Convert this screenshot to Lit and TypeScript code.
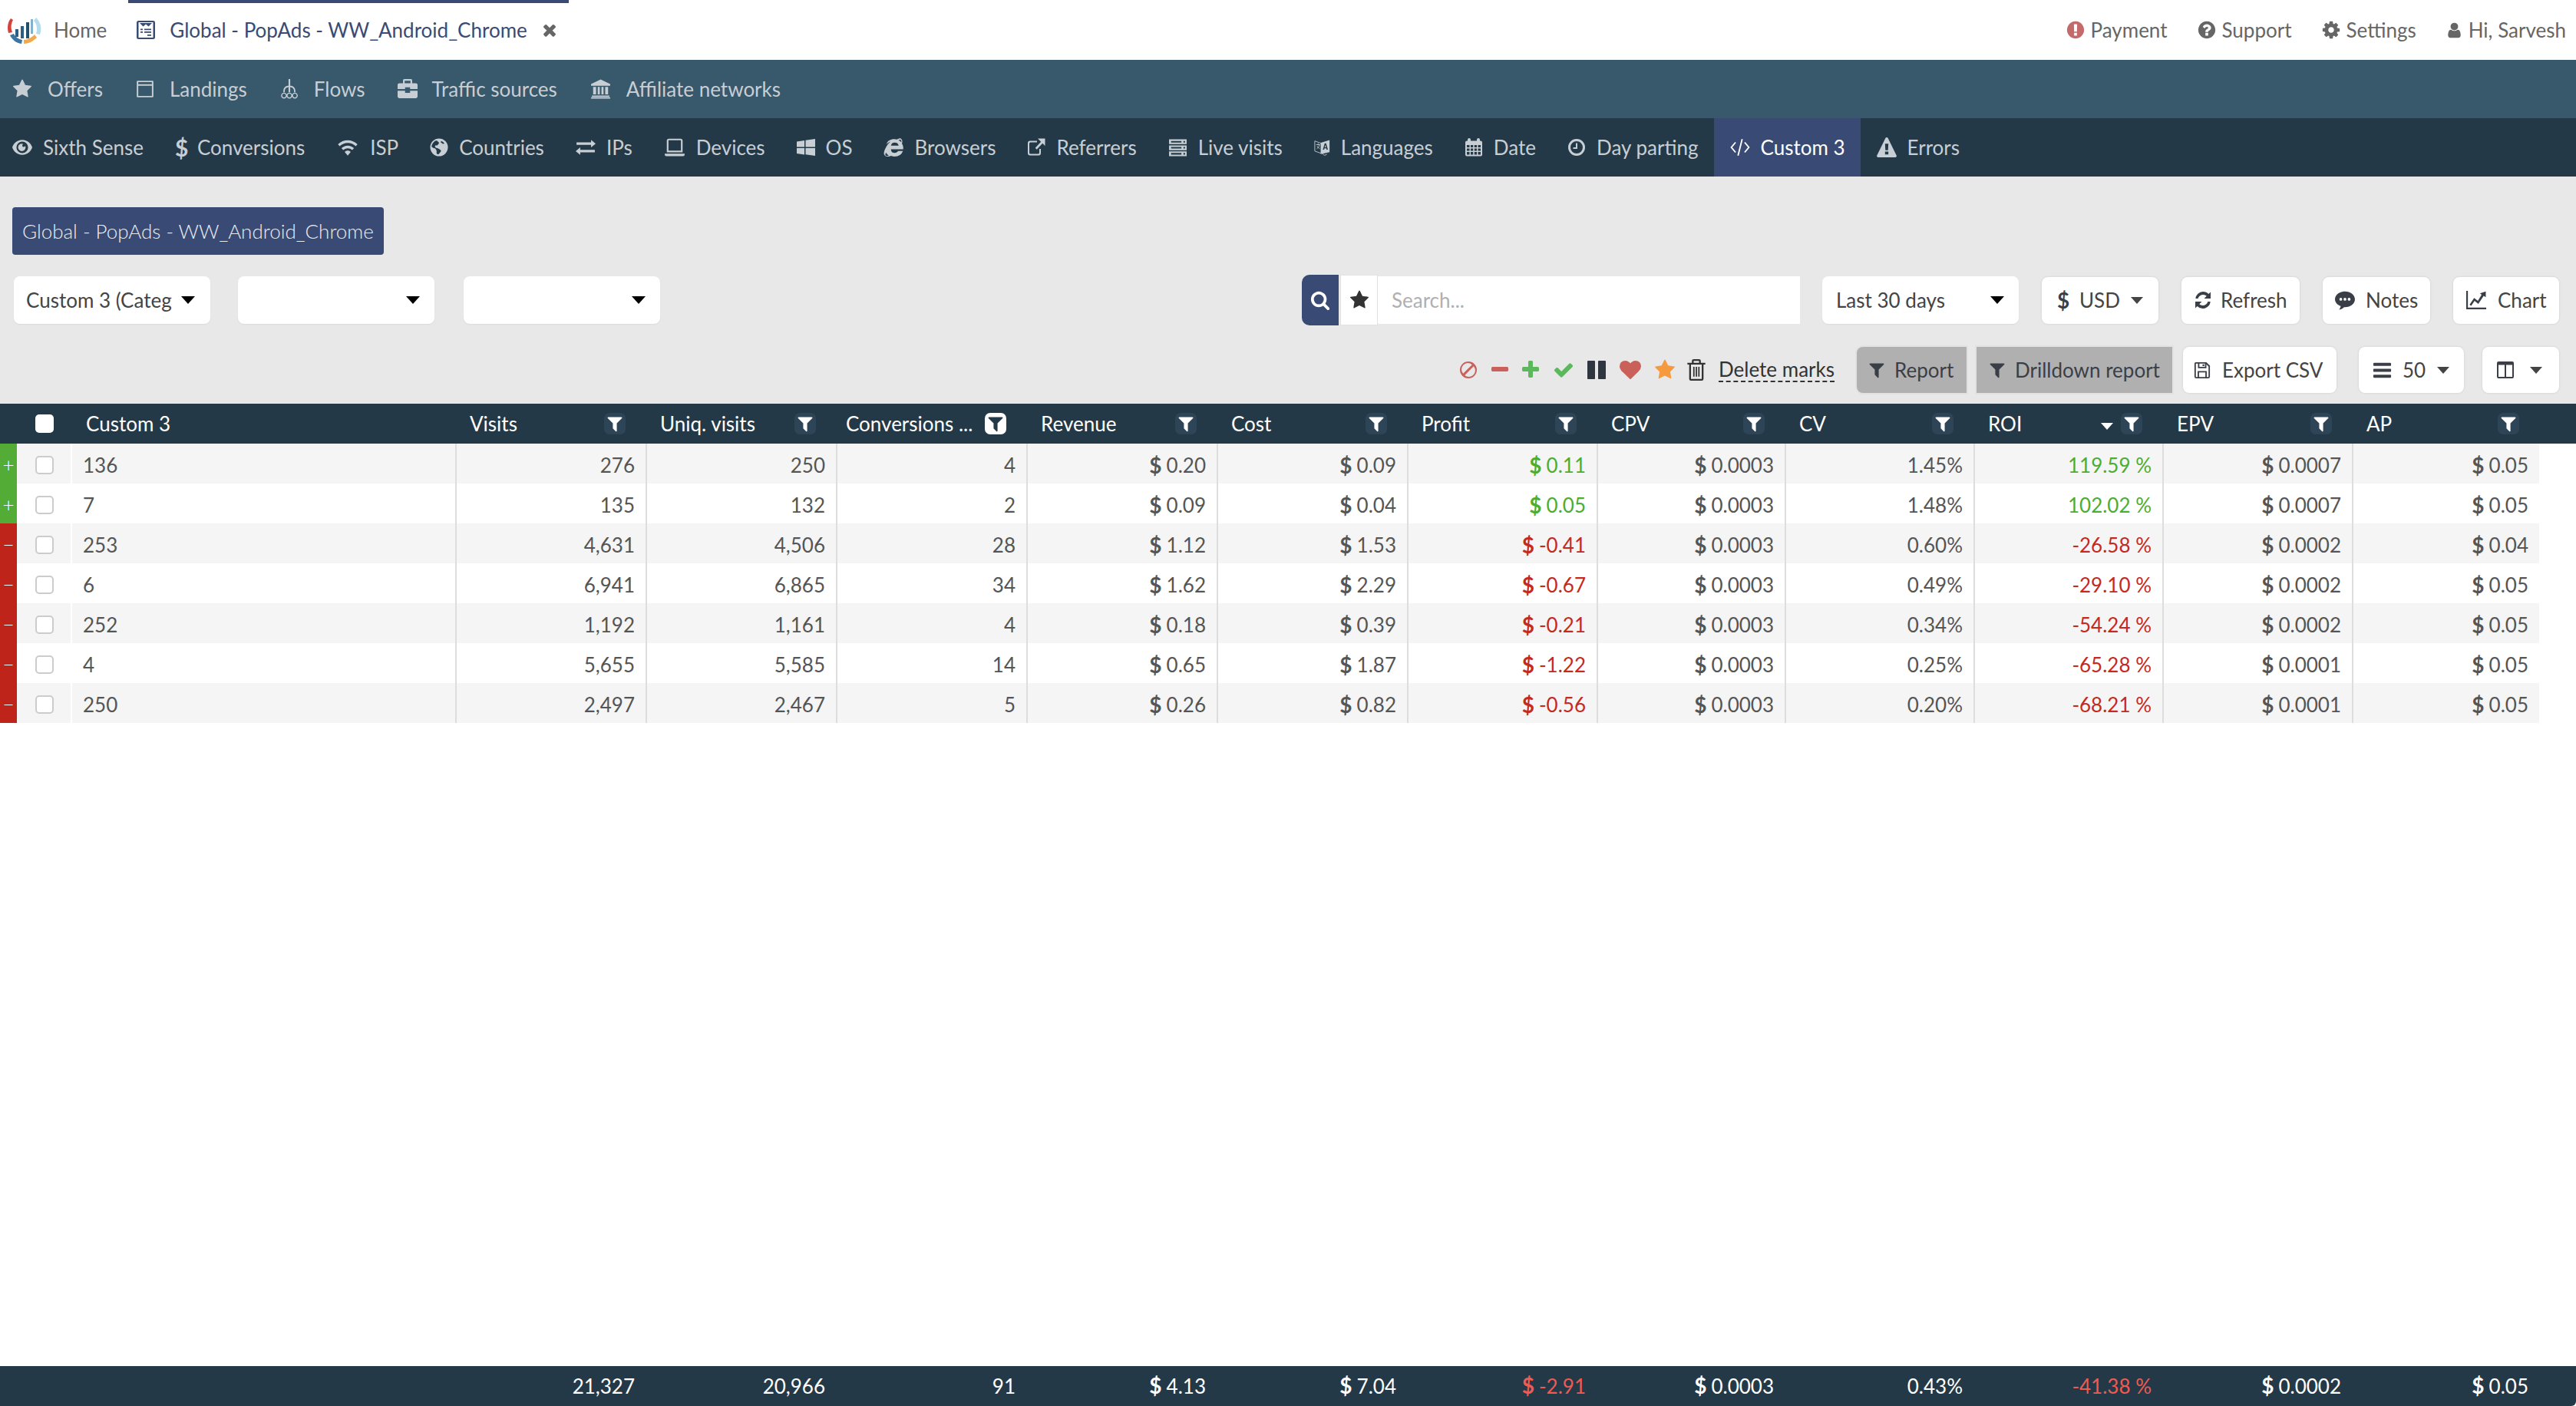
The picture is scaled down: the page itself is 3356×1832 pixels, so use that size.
import { LitElement, html, css, svg } from "lit";
import { customElement } from "lit/decorators.js";

const FA: Record<string, string> = {
  star: "M1728 647q0 22-26 48l-363 354 86 500q1 7 1 20 0 21-10.500 35.500t-30.500 14.500q-19 0-40-12l-449-236-449 236q-22 12-40 12-21 0-31.500-14.500t-10.500-35.500q0-6 2-20l86-500-364-354q-25-27-25-48 0-37 56-46l502-73 225-455q19-41 49-41t49 41l225 455 502 73q56 9 56 46z",
  filter: "M1595 295q17 41-14 70l-493 493v742q0 42-39 59-13 5-25 5-27 0-45-19l-256-256q-19-19-19-45v-486l-493-493q-31-29-14-70 17-39 59-39h1280q42 0 59 39z",
  heart: "M896 1664q-26 0-44-18l-624-602q-10-8-27.500-26t-55.500-65.500-68-97.500-53.500-121-23.500-138q0-220 127-344t351-124q62 0 126.500 21.500t120 58 95.500 68.500 76 68q36-36 76-68t95.500-68.500 120-58 126.500-21.500q224 0 351 124t127 344q0 221-229 450l-623 600q-18 18-44 18z",
  user: "M1536 1399q0 109-62.500 187t-150.500 78h-854q-88 0-150.500-78t-62.500-187q0-85 8.500-160.500t31.500-152 58.500-131 94-89 134.500-34.500q131 128 313 128t313-128q76 0 134.500 34.500t94 89 58.500 131 31.500 152 8.500 160.500zm-256-887q0 159-112.500 271.500t-271.500 112.500-271.500-112.500-112.500-271.500 112.500-271.500 271.500-112.500 271.500 112.500 112.500 271.500z",
  search: "M1216 832q0-185-131.500-316.500t-316.500-131.500-316.500 131.500-131.500 316.500 131.500 316.500 316.500 131.500 316.500-131.500 131.500-316.500zm512 832q0 52-38 90t-90 38q-54 0-90-38l-343-342q-179 124-399 124-143 0-273.500-55.500t-225-150-150-225-55.500-273.500 55.500-273.500 150-225 225-150 273.500-55.500 273.500 55.500 225 150 150 225 55.500 273.500q0 220-124 399l343 343q37 37 37 90z",
  check: "M1671 566q0 40-28 68l-724 724-136 136q-28 28-68 28t-68-28l-136-136-362-362q-28-28-28-68t28-68l136-136q28-28 68-28t68 28l294 295 656-657q28-28 68-28t68 28l136 136q28 28 28 68z",
  times: "M1490 1322q0 40-28 68l-136 136q-28 28-68 28t-68-28l-294-294-294 294q-28 28-68 28t-68-28l-136-136q-28-28-28-68t28-68l294-294-294-294q-28-28-28-68t28-68l136-136q28-28 68-28t68 28l294 294 294-294q28-28 68-28t68 28l136 136q28 28 28 68t-28 68l-294 294 294 294q28 28 28 68z",
  bars: "M1664 1344v128q0 26-19 45t-45 19h-1408q-26 0-45-19t-19-45v-128q0-26 19-45t45-19h1408q26 0 45 19t19 45zm0-512v128q0 26-19 45t-45 19h-1408q-26 0-45-19t-19-45v-128q0-26 19-45t45-19h1408q26 0 45 19t19 45zm0-512v128q0 26-19 45t-45 19h-1408q-26 0-45-19t-19-45v-128q0-26 19-45t45-19h1408q26 0 45 19t19 45z",
  plus: "M1600 736v192q0 40-28 68t-68 28h-416v416q0 40-28 68t-68 28h-192q-40 0-68-28t-28-68v-416h-416q-40 0-68-28t-28-68v-192q0-40 28-68t68-28h416v-416q0-40 28-68t68-28h192q40 0 68 28t28 68v416h416q40 0 68 28t28 68z",
  minus: "M1600 736v192q0 40-28 68t-68 28h-1216q-40 0-68-28t-28-68v-192q0-40 28-68t68-28h1216q40 0 68 28t28 68z",
  pause: "M1664 192v1408q0 26-19 45t-45 19h-512q-26 0-45-19t-19-45v-1408q0-26 19-45t45-19h512q26 0 45 19t19 45zm-896 0v1408q0 26-19 45t-45 19h-512q-26 0-45-19t-19-45v-1408q0-26 19-45t45-19h512q26 0 45 19t19 45z",
  excl: "M896 128q209 0 385.500 103t279.500 279.500 103 385.500-103 385.500-279.500 279.500-385.500 103-385.500-103-279.500-279.500-103-385.500 103-385.500 279.500-279.500 385.500-103zm128 1247v-190q0-14-9-23.500t-22-9.500h-192q-13 0-23 10t-10 23v190q0 13 10 23t23 10h192q13 0 22-9.500t9-23.500zm-2-344l18-621q0-12-10-18-10-8-24-8h-220q-14 0-24 8-10 6-10 18l17 621q0 10 10 17.500t24 7.500h185q14 0 23.500-7.500t10.500-17.500z",
  question: "M1024 1376v-192q0-14-9-23t-23-9h-192q-14 0-23 9t-9 23v192q0 14 9 23t23 9h192q14 0 23-9t9-23zm256-672q0-88-55.500-163t-138.500-116-170-41q-243 0-371 213-15 24 8 42l132 100q7 6 19 6 16 0 25-12 53-68 86-92 34-24 86-24 48 0 85.500 26t37.500 59q0 38-20 61t-68 45q-63 28-115.500 86.500t-52.500 125.500v36q0 14 9 23t23 9h192q14 0 23-9t9-23q0-19 21.500-49.500t54.500-49.500q32-18 49-28.500t46-35 44.500-48 28-60.500 12.500-81zm384 192q0 209-103 385.500t-279.500 279.500-385.500 103-385.500-103-279.500-279.500-103-385.500 103-385.500 279.500-279.500 385.500-103 385.500 103 279.500 279.500 103 385.500z",
  cog: "M1152 896q0-106-75-181t-181-75-181 75-75 181 75 181 181 75 181-75 75-181zm512-109v222q0 12-8 23t-20 13l-185 28q-19 54-39 91 35 50 107 138 10 12 10 25t-9 23q-27 37-99 108t-94 71q-12 0-26-9l-138-108q-44 23-91 38-16 136-29 186-7 28-36 28h-222q-14 0-24.500-8.500t-11.500-21.500l-28-184q-49-16-90-37l-141 107q-10 9-25 9-14 0-25-11-126-114-165-168-7-10-7-23 0-12 8-23 15-21 51-66.500t54-70.500q-27-50-41-99l-183-27q-13-2-21-12.500t-8-23.500v-222q0-12 8-23t19-13l186-28q14-46 39-92-40-57-107-138-10-12-10-24 0-10 9-23 26-36 98.500-107.500t94.500-71.500q13 0 26 10l138 107q44-23 91-38 16-136 29-186 7-28 36-28h222q14 0 24.500 8.500t11.500 21.500l28 184q49 16 90 37l142-107q9-9 24-9 13 0 25 10 129 119 165 170 7 8 7 22 0 12-8 23-15 21-51 66.500t-54 70.500q26 50 41 98l183 28q13 2 21 12.500t8 23.500z",
};

const fa = (n: string, c = "") =>
  html`<svg class="ic ${c}" viewBox="0 0 1792 1792"><path d=${FA[n]}></path></svg>`;

const D: Record<string, any> = {
  window: svg`<path fill-rule="evenodd" d="M3 2h18a1 1 0 0 1 1 1v18a1 1 0 0 1-1 1H3a1 1 0 0 1-1-1V3a1 1 0 0 1 1-1zm.8 6v12.200h16.400V8zm0-4.200v2.400h16.400V3.800z"/>`,
  flows: svg`<path d="M11 0h2v8c2.700 0 5.800 1.500 6.200 5.500l.1 2.500h-1.700l-.1-2.500c-.3-2.300-2-3.500-4.500-3.800V16h-2v-6.300C8.500 10 6.800 11.200 6.500 13.500L6.400 16H4.700l.1-2.500C5.200 9.500 8.300 8 11 8z"/><path fill="none" stroke="currentColor" stroke-width="1.300" d="M5.500 17a2.900 2.900 0 1 0 .1 0zM12 17a2.900 2.900 0 1 0 .1 0zM18.500 17a2.900 2.900 0 1 0 .1 0z"/>`,
  brief: svg`<path fill-rule="evenodd" d="M8 0h8a1.500 1.500 0 0 1 1.500 1.500V5H22a2 2 0 0 1 2 2v5h-9v-2H9v2H0V7a2 2 0 0 1 2-2h4.500V1.500A1.500 1.500 0 0 1 8 0zM8.500 2v3h7V2zM0 14h9v2.500h6V14h9v7a2 2 0 0 1-2 2H2a2 2 0 0 1-2-2z"/>`,
  bank: svg`<path d="M12 .5 23.500 6v2H.5V6zM3 9.500h3.500v9H3zM8.500 9.500H11v9H8.500zM13 9.500h2.500v9H13zM17.500 9.500H21v9h-3.500zM1.500 19.800h21v1.700h-21zM.5 22h23v1.500H.5z"/>`,
  eye: svg`<path fill-rule="evenodd" d="M12 3c6.600 0 11 5.200 12 9-1 3.800-5.400 9-12 9S1 15.800 0 12c1-3.800 5.400-9 12-9zm0 2a7 7 0 1 0 0 14 7 7 0 0 0 0-14zm-.5 2.500c.6 0 1.300.2 1.800.5-.8.200-1.300.9-1.300 1.700 0 1 .8 1.800 1.800 1.800.8 0 1.500-.5 1.700-1.300.3.500.5 1.200.5 1.800a4.500 4.500 0 1 1-4.500-4.500z"/>`,
  wifi: svg`<path d="M12 3.500c4.500 0 8.600 1.800 11.700 4.800l-2 2.400A14 14 0 0 0 12 6.800c-3.800 0-7.200 1.500-9.700 3.900l-2-2.400A16.600 16.600 0 0 1 12 3.500zM12 10c2.900 0 5.500 1.200 7.500 3l-2 2.300A8 8 0 0 0 12 13.100c-2.100 0-4 .9-5.500 2.200l-2-2.300c2-1.800 4.600-3 7.500-3zM12 16c1.400 0 2.700.6 3.600 1.500L12 22l-3.600-4.500c.9-.9 2.200-1.500 3.600-1.500z"/>`,
  globe: svg`<path fill-rule="evenodd" d="M12 .5a11.500 11.500 0 1 1 0 23 11.500 11.500 0 0 1 0-23zM7 3.500c-2.500 1.500-4.500 4.500-4.800 7.500.8.700 1.500 1.400 2.300 1.700 1.200.4 2.500.2 3 1.300.4 1 1.200 1.500 1.300 2.700.1 1.300-.3 2.700.5 4 .7.300 1.500.4 2.200.4.700-1.300 2.500-2.500 3-4 .3-1-.5-1.800-1.500-2.300-1-.7-2-1.800-3.400-1.800-1 0-1.800-.7-2.500-1.300-.5-.7-.4-1.700.3-2.300.8-.2 1.500.3 2.300.2.300-.8.900-1.300 1.500-1.800.8-.8.800-2 .2-2.800-.9-.3-1.700-1.100-2-1.800-.9-.1-1.500-.1-2 .2zm8 .3c-.5.5-.8 1.200-.7 1.800.5.700 1.500.7 2 1.500.4.700 1.700.5 2.700 0a9.500 9.500 0 0 0-4-3.300z"/>`,
  exch: svg`<path d="M24 7.500 18.500 3v3H1v3h17.500v3zM0 16.500 5.500 12v3H23v3H5.500v3z"/>`,
  laptop: svg`<path fill-rule="evenodd" d="M5 1.500h14A2.500 2.500 0 0 1 21.500 4v14h-19V4A2.500 2.500 0 0 1 5 1.500zm-.5 2V16h15V3.500zM0 19.500h24v1A2 2 0 0 1 22 22.500H2a2 2 0 0 1-2-2z"/>`,
  win: svg`<path d="M0 4.500 10 3v8.500H0zM11.500 2.800 24 1v10.500H11.500zM0 13h10v8.500L0 20zM11.500 13H24v10l-12.500-1.800z"/>`,
  ie: svg`<path fill-rule="evenodd" d="M21 1.500c1.800 1.200 2 3.500 1.200 6 1 1.500 1.600 3.200 1.600 5.200 0 .6 0 1-.1 1.500H9c0 3 2 4.500 4.500 4.500 1.800 0 3.300-.8 4-2.300h5.800c-1.300 4-5 6.700-9.800 6.700-1.500 0-3-.3-4.300-.9-2.500 1.200-5.800 1.500-7.500-.2-2-2-1-5.700.8-9C4 9.500 6 7 8.500 5c-1.500.2-3.500 1.700-5 3.300C4.700 4 8.500 2 13 2c1.200 0 2.300.2 3.300.5 1.800-1 3.700-1.700 4.700-1zM9 10h9.200C18 7.800 16 6.300 13.500 6.300 11 6.300 9.200 7.800 9 10zM20 2.800c-.6-.1-1.300.1-2 .5 1.300.6 2.500 1.500 3.400 2.500.3-1.300 0-2.700-1.400-3zM2.800 22c1 .5 2.300.3 3.600-.2-1.400-.9-2.600-2.100-3.400-3.600-.8 1.700-1.200 3-.2 3.800z"/>`,
  ext: svg`<path d="M4 3.500h9v2H4.500A1.500 1.500 0 0 0 3 7v12a1.500 1.500 0 0 0 1.500 1.500h10A1.500 1.500 0 0 0 16 19v-5h2v5.500a3 3 0 0 1-3 3H4a3 3 0 0 1-3-3V6.500a3 3 0 0 1 3-3z"/><path d="M14 .5h9.500V10l-3.300-3.300-7.500 8-2-2 7.500-8z"/>`,
  server: svg`<path fill-rule="evenodd" d="M1 2h22v6H1zm2.500 2v2h13V4zm15.500 0v2h2V4zM1 9.500h22v6H1zm2.500 2v2h13v-2zm15.500 0v2h2v-2zM1 17h22v6H1zm2.500 2v2h13v-2zm15.500 0v2h2v-2z"/>`,
  lang: svg`<path d="M1 2.500 10.500 6v15L1 17.500z" fill="none" stroke="currentColor" stroke-width="1"/><path d="M10 5 23 1v18l-13 3z"/><path fill="#243947" d="M13 15.500 15.800 6h2l2.800 9.500h-2l-.5-2h-2.700l-.5 2zM15.800 12h2l-1-3.800z"/><path fill="none" stroke="currentColor" stroke-width="1" d="M3 8h6M6 6v2M8 8c-.5 3-2 5-4 6M4.500 10c.5 1.500 2 3 4 4M13 21c0 2 2 3 4 2.500l2-1.500"/>`,
  cal: svg`<path fill-rule="evenodd" d="M6 0a2 2 0 0 1 2 2v1.500h8V2a2 2 0 0 1 4 0v1.500h1A2 2 0 0 1 23 5.500v16a2 2 0 0 1-2 2H3a2 2 0 0 1-2-2v-16a2 2 0 0 1 2-2h1V2a2 2 0 0 1 2-2zM3 9v3h3.500V9zm5 0v3h3.200V9zm4.800 0v3H16V9zm4.700 0v3H21V9zM3 13.500v3h3.500v-3zm5 0v3h3.200v-3zm4.800 0v3H16v-3zm4.700 0v3H21v-3zM3 18v3.500h3.500V18zm5 0v3.500h3.200V18zm4.800 0v3.500H16V18zm4.700 0v3.500H21V18z"/>`,
  clock: svg`<path fill-rule="evenodd" d="M12 1a11 11 0 1 1 0 22 11 11 0 0 1 0-22zm0 3a8 8 0 1 0 0 16 8 8 0 0 0 0-16zm1 2.500V14H7.500v-2H11V6.500z"/>`,
  code: svg`<path fill="none" stroke="currentColor" stroke-width="1.700" d="M6.500 6 1.500 12l5 6M17.500 6l5 6-5 6M14.500 2l-5 20"/>`,
  warn: svg`<path fill-rule="evenodd" d="M12 0c.6 0 1.100.3 1.400.8L23.600 21.500a1.600 1.600 0 0 1-1.400 2.500H1.800a1.600 1.600 0 0 1-1.400-2.500L10.600.8C10.900.3 11.400 0 12 0zm-2 7.500.4 8h3.200l.4-8zm0 9.500v3.500h4V17z"/>`,
  refresh: svg`<path d="M12 1c2.900 0 5.500 1.100 7.400 3L22 1.500V10h-8.500l3.200-3.200A6.800 6.800 0 0 0 5.600 10H2.300A10 10 0 0 1 12 1zM2 14h8.500l-3.200 3.200A6.800 6.800 0 0 0 18.400 14h3.300A10 10 0 0 1 4.600 20L2 22.500z"/>`,
  comment: svg`<path fill-rule="evenodd" d="M12 1.500c6.600 0 12 4.200 12 9.500s-5.400 9.500-12 9.500h-1c-1.500 1.500-3.500 2.600-6 3 1-1.300 1.700-2.700 1.900-4.300C2.800 17.700 0 14.600 0 11c0-5.300 5.400-9.500 12-9.500zM7 9.300a1.700 1.700 0 1 0 0 3.400 1.700 1.700 0 0 0 0-3.400zm5 0a1.700 1.700 0 1 0 0 3.400 1.700 1.700 0 0 0 0-3.400zm5 0a1.700 1.700 0 1 0 0 3.400 1.700 1.700 0 0 0 0-3.400z"/>`,
  chart: svg`<path d="M0 1h2v20h22v2H0z"/><path d="M4 17.500 9.500 9.500l4.500 3.500L18.500 5.500 16.500 4l7-2.500v7L21 7 14.500 16.500 10 13l-4 6z"/>`,
  save: svg`<path fill-rule="evenodd" d="M3 .5h15l5 5V21a2.500 2.500 0 0 1-2.500 2.500h-17A2.500 2.500 0 0 1 1 21V2.500A2 2 0 0 1 3 .5zM3 2.500V21.500h2.500V13h13v8.500H21V6.500L18 3.500V9H6V2.500zM7.500 15v6.500h9V15zM8 2.500V7h8V2.500zM12.500 3.500h2.500V6h-2.500z"/>`,
  cols: svg`<path fill-rule="evenodd" d="M3 1h18a2 2 0 0 1 2 2v18a2 2 0 0 1-2 2H3a2 2 0 0 1-2-2V3a2 2 0 0 1 2-2zm0 4.500V21h8V5.500zm10 0V21h8V5.500z"/>`,
  trash: svg`<path fill-rule="evenodd" d="M9 0h6a2 2 0 0 1 2 2v2h5v2h-2v16a2 2 0 0 1-2 2H6a2 2 0 0 1-2-2V6H2V4h5V2a2 2 0 0 1 2-2zm0 2v2h6V2zM6 6v16h12V6zm2.500 2.500h1.500v11H8.500zm2.800 0h1.500v11h-1.500zm2.800 0h1.500v11h-1.500z"/>`,
  ban: svg`<path fill-rule="evenodd" d="M12 0a12 12 0 1 1 0 24 12 12 0 0 1 0-24zm7.500 6.800L6.800 19.500A9 9 0 0 0 19.500 6.800zM17.200 4.500A9 9 0 0 0 4.500 17.200z"/>`,
  tabdoc: svg`<path fill-rule="evenodd" d="M2.500 0h19A2.500 2.500 0 0 1 24 2.500v19a2.500 2.500 0 0 1-2.500 2.500h-19A2.500 2.500 0 0 1 0 21.500v-19A2.500 2.500 0 0 1 2.500 0zm0 2v20h19V2zM4 3h16l-4.500 4.500L12 4.500 8.500 7.500zM5 10.500h3v1.800H5zm5 0h9v1.800h-9zM5 14h3v1.800H5zm5 0h9v1.800h-9zM14 18h5v1.800h-5z"/>`,
};
const ic = (n: string, c = "") => html`<svg class="ic ${c}" viewBox="0 0 24 24">${D[n]}</svg>`;

const band1 = [
  [fa("star", "w28"), "Offers"],
  [ic("window", "w26"), "Landings"],
  [ic("flows", "w26"), "Flows"],
  [ic("brief", "w26"), "Traffic sources"],
  [ic("bank", "w29"), "Affiliate networks"],
] as const;

const band2 = [
  [ic("eye", "w26"), "Sixth Sense", ""],
  [html`<span class="usd">$</span>`, "Conversions", ""],
  [ic("wifi", "w30"), "ISP", ""],
  [ic("globe", "w24"), "Countries", ""],
  [ic("exch", "w26"), "IPs", ""],
  [ic("laptop", "w28"), "Devices", ""],
  [ic("win", "w24"), "OS", ""],
  [ic("ie", "w26"), "Browsers", ""],
  [ic("ext", "w24"), "Referrers", ""],
  [ic("server", "w25"), "Live visits", ""],
  [ic("lang", "w21 tall"), "Languages", ""],
  [ic("cal", "w24"), "Date", ""],
  [ic("clock", "w24"), "Day parting", ""],
  [ic("code", "w26"), "Custom 3", "active"],
  [ic("warn", "w26"), "Errors", ""],
] as const;

const heads = ["Visits", "Uniq. visits", "Conversions ...", "Revenue", "Cost", "Profit", "CPV", "CV", "ROI", "EPV", "AP"];

type Row = { mark: "+" | "−"; name: string; v: string[] };
const rows: Row[] = [
  { mark: "+", name: "136", v: ["276", "250", "4", "$0.20", "$0.09", "$0.11", "$0.0003", "1.45%", "119.59 %", "$0.0007", "$0.05"] },
  { mark: "+", name: "7", v: ["135", "132", "2", "$0.09", "$0.04", "$0.05", "$0.0003", "1.48%", "102.02 %", "$0.0007", "$0.05"] },
  { mark: "−", name: "253", v: ["4,631", "4,506", "28", "$1.12", "$1.53", "$-0.41", "$0.0003", "0.60%", "-26.58 %", "$0.0002", "$0.04"] },
  { mark: "−", name: "6", v: ["6,941", "6,865", "34", "$1.62", "$2.29", "$-0.67", "$0.0003", "0.49%", "-29.10 %", "$0.0002", "$0.05"] },
  { mark: "−", name: "252", v: ["1,192", "1,161", "4", "$0.18", "$0.39", "$-0.21", "$0.0003", "0.34%", "-54.24 %", "$0.0002", "$0.05"] },
  { mark: "−", name: "4", v: ["5,655", "5,585", "14", "$0.65", "$1.87", "$-1.22", "$0.0003", "0.25%", "-65.28 %", "$0.0001", "$0.05"] },
  { mark: "−", name: "250", v: ["2,497", "2,467", "5", "$0.26", "$0.82", "$-0.56", "$0.0003", "0.20%", "-68.21 %", "$0.0001", "$0.05"] },
];
const totals = ["21,327", "20,966", "91", "$4.13", "$7.04", "$-2.91", "$0.0003", "0.43%", "-41.38 %", "$0.0002", "$0.05"];

const money = (s: string) =>
  s.startsWith("$") ? html`<b class="d">$</b>${s.slice(1)}` : s;

@customElement("app-root")
export class AppRoot extends LitElement {
  static styles = css`
    :host { display: block; width: 3356px; height: 1832px; font-family: Lato, "Liberation Sans", sans-serif; font-size: 26px; color: #555; background: #fff; overflow: hidden; }
    .page { display: flex; flex-direction: column; height: 1832px; }
    .ic { fill: currentColor; flex: none; display: block; height: 26px; width: 26px; }
    .w20 { width: 20px; } .w21 { width: 21px; } .w22 { width: 22px; } .w24 { width: 24px; } .w25 { width: 25px; } .w26 { width: 26px; } .w28 { width: 28px; } .w29 { width: 29px; } .w30 { width: 30px; }
    .tall { height: 32px; }
    .top { height: 78px; flex: none; display: flex; align-items: center; justify-content: space-between; }
    .top > div { display: flex; align-items: center; height: 100%; }
    .logo { width: 46px; height: 36px; margin-left: 9px; margin-right: 15px; margin-top: 4px; flex: none; }
    .home { color: #666; }
    .tab { display: flex; align-items: center; height: 100%; box-sizing: border-box; border-top: 4px solid #394b74; margin-left: 28px; padding: 0 13px 4px 11px; color: #394b74; }
    .tab .doc { width: 24px; height: 24px; margin-right: 19px; }
    .tab .x { width: 24px; height: 26px; margin-left: 17px; color: #666; }
    .r { display: flex; align-items: center; color: #666; margin-right: 38px; gap: 7px; }
    .r:last-child { margin-right: 13px; }
    .r .ic { width: 26px; height: 26px; }
    .r .ic.u { width: 23px; height: 25px; }
    .r.pay .ic { color: #c46a6a; }
    .band { height: 76px; flex: none; display: flex; align-items: center; color: #c7ced4; }
    .b1 { background: #38586b; padding-left: 15px; gap: 42px; }
    .b1 .it { display: flex; align-items: center; gap: 19px; }
    .b2 { background: #243947; padding-left: 0; }
    .b2 .it { display: flex; align-items: center; height: 100%; padding: 0 20.500px 0 16px; gap: 14px; }
    .b2 .it + .it { padding-left: 20.500px; }
    .b2 .it.active { background: #394b74; color: #fff; }
    .usd { font-weight: 700; font-size: 30px; width: 15px; }
    .main { background: #e8e8e8; height: 296px; flex: none; box-sizing: border-box; }
    .badgeRow { padding: 40px 0 0 16px; height: 102px; box-sizing: border-box; }
    .badge { display: inline-flex; align-items: center; height: 62px; width: 484px; box-sizing: border-box; padding-left: 13px; background: #394b74; border-radius: 4px; color: #e9ecf2; font-weight: 300; white-space: nowrap; }
    .ctl { display: flex; align-items: center; height: 62px; margin-top: 28px; padding-left: 18px; padding-right: 22px; }
    .sel { width: 256px; height: 62px; background: #fff; border-radius: 8px; box-sizing: border-box; padding: 0 19px 0 16px; display: flex; align-items: center; justify-content: space-between; color: #444; margin-right: 36px; box-shadow: 0 1px 2px rgba(0,0,0,.06); white-space: nowrap; }
    .sel.first { justify-content: flex-start; gap: 12px; }
    .sel.third { margin-left: 2px; }
    .caret { width: 0; height: 0; border-left: 9.500px solid transparent; border-right: 9.500px solid transparent; border-top: 10px solid #000; flex: none; }
    .caret.sm { border-left-width: 8px; border-right-width: 8px; border-top-width: 9px; border-top-color: #444; }
    .sp { flex: 1; }
    .sbtn { width: 48px; height: 66px; background: #394b74; border-radius: 10px 0 0 10px; color: #fff; display: flex; align-items: center; justify-content: center; margin-right: 2px; flex: none; }
    .sbtn .ic { width: 26px; height: 26px; }
    .sstar { width: 49px; height: 66px; background: #fff; display: flex; align-items: center; justify-content: center; color: #333; box-sizing: border-box; border: 1px solid #e2e2e2; flex: none; }
    .sstar .ic { width: 26px; height: 26px; }
    .sinput { width: 550px; height: 62px; background: #fff; color: #b0b0b0; display: flex; align-items: center; box-sizing: border-box; padding-left: 18px; margin-right: 29px; flex: none; }
    .sel.last { width: 256px; margin-right: 30px; padding-left: 18px; }
    .btn { height: 61px; background: #fff; border-radius: 8px; display: flex; align-items: center; box-sizing: border-box; color: #444; box-shadow: 0 0 3px rgba(0,0,0,.12); flex: none; }
    .btn .ic { width: 26px; height: 26px; color: #3a3f47; }
    .usdb { width: 152px; padding-left: 20px; margin-right: 30px; gap: 14px; }
    .usdb .usd { font-size: 28px; color: #3a3f47; }
    .refr { width: 154px; padding-left: 16px; margin-right: 30px; gap: 11px; }
    .refr .ic { width: 24px; height: 24px; }
    .note { width: 140px; padding-left: 16px; margin-right: 30px; gap: 14px; }
    .chrt { width: 138px; padding-left: 16px; gap: 14px; }
    .chrt .ic { width: 28px; height: 26px; }
    .ctl2 { display: flex; align-items: center; height: 60px; margin-top: 30px; padding-right: 22px; justify-content: flex-end; }
    .marks { display: flex; align-items: center; }
    .marks span { margin-right: 15px; }
    .marks span:nth-child(1) { margin-right: 13px; }
    .marks span:nth-child(2) { margin-right: 12px; }
    .marks span:nth-child(5) { margin-right: 16.500px; }
    .marks span:nth-child(6) { margin-right: 17px; }
    .marks span:nth-child(7) { margin-right: 13px; }
    .marks span:nth-child(8) { margin-right: 15px; }
    .marks .ic { width: 28px; height: 28px; }
    .marks .s22 { width: 22px; height: 24px; margin: 0 3px; }
    .m1 { color: #c9605a; } .m2 { color: #5cb85c; } .m3 { color: #2f3640; } .m4 { color: #f59a3f; }
    .marks .trash { color: #333; }
    .del { color: #333; border-bottom: 2px dashed #333; line-height: 30px; margin-right: 29px; white-space: nowrap; }
    .gr { height: 60px; background: #b0b0b0; display: flex; align-items: center; color: #3a3f47; box-sizing: border-box; box-shadow: 0 0 0 2px #e2e2e2; flex: none; }
    .gr .ic { width: 24px; height: 26px; }
    .rep { width: 143px; padding-left: 14px; gap: 11px; border-radius: 8px 0 0 8px; margin-right: 13px; }
    .dril { width: 255px; padding-left: 15px; gap: 11px; margin-right: 14px; }
    .exp { width: 200px; padding-left: 14px; gap: 15px; margin-right: 29px; height: 60px; }
    .exp .ic { width: 22px; height: 25px; }
    .per { width: 137px; padding-left: 17px; gap: 13px; margin-right: 24px; height: 60px; }
    .per .ic { width: 27px; height: 27px; }
    .per .caret, .colb .caret { margin-left: 2px; }
    .colb { width: 100px; padding-left: 18px; gap: 18px; height: 60px; }
    .colb .ic { width: 24px; height: 24px; }
    .grid { display: grid; grid-template-columns: 22px 70px 2px 499px 248px 248px 248px 248px 248px 247px 245px 246px 246px 247px 244px; }
    .head { height: 52px; flex: none; background: #243947; color: #fff; align-items: center; }
    .head .cb { grid-column: 2; justify-self: center; margin-left: 2px; width: 24px; height: 24px; border-radius: 5px; background: #fff; }
    .head .nm { grid-column: 4; padding-left: 18px; }
    .hc { display: flex; align-items: center; padding-left: 19px; padding-right: 26px; box-sizing: border-box; height: 100%; white-space: nowrap; }
    .hc.tight { padding-left: 13px; }
    .hc .t { flex: 1; }
    .flt { width: 28px; height: 28px; border-radius: 7px; background: #2e4558; color: #fff; display: flex; align-items: center; justify-content: center; flex: none; }
    .flt .ic { width: 24px; height: 24px; }
    .flt.on { background: #fff; color: #243947; }
    .sort { width: 0; height: 0; border-left: 8px solid transparent; border-right: 8px solid transparent; border-top: 9px solid #fff; margin: 6px 10px 0 0; }
    .row { height: 52px; color: #555; align-items: stretch; width: 3308px; }
    .row:nth-child(odd) .c { background: #f5f5f5; }
    .row .c { background: #fff; display: flex; align-items: center; box-sizing: border-box; padding-top: 3px; }
    .mk { display: flex; align-items: center; justify-content: center; color: #fff; font-size: 26px; font-weight: 300; padding-top: 1px; box-sizing: border-box; }
    .mk.p { background: #52ac36; } .mk.m { background: #bf241a; }
    .row .chk { justify-content: center; padding-left: 2px; }
    .box { width: 24px; height: 24px; border: 2px solid #ccc; border-radius: 5px; background: #fff; box-sizing: border-box; }
    .gapc { background: #fff; }
    .row .nm { padding-left: 14px; }
    .num { justify-content: flex-end; padding-right: 14px; border-left: 2px solid #ddd; white-space: pre; }
    .d { font-weight: 700; margin-right: 6px; font-size: 28px; line-height: 1; }
    .g { color: #4cae2e; }
    .rd { color: #c42a20; }
    .rows { flex: 1; }
    .foot { height: 52px; flex: none; background: #243947; color: #fff; border-bottom-right-radius: 6px; align-items: center; }
    .foot .sp4 { grid-column: 1 / span 4; }
    .foot .fc { text-align: right; padding-right: 14px; white-space: pre; }
    .foot .red { color: #ef5a52; }
  `;

  private renderRow(r: Row) {
    return html`<div class="grid row">
      <div class="mk ${r.mark === "+" ? "p" : "m"}">${r.mark}</div>
      <div class="c chk"><div class="box"></div></div>
      <div class="gapc"></div>
      <div class="c nm">${r.name}</div>
      ${r.v.map((v, i) => {
        const col = i === 5 || i === 8 ? (v.includes("-") ? "rd" : "g") : "";
        return html`<div class="c num ${col}">${money(v)}</div>`;
      })}
    </div>`;
  }

  render() {
    return html`<div class="page">
      <div class="top">
        <div>
          <svg class="logo" viewBox="0 0 46 36">
            <path d="M5 1C1 6 0 13 2 20l5-1C5 14 5 8 8 3z" fill="#d4423a"/>
            <path d="M4 23c3 6 8 10 15 11l1-5c-5-1-9-4-11-8z" fill="#3d74a3"/>
            <path d="M22 34c6 0 12-3 17-8l-3-4c-4 4-9 7-14 7z" fill="#f3a94a"/>
            <path d="M38 0c6 6 8 14 5 22l-5-1c2-6 1-13-3-17z" fill="#b4dcec"/>
            <rect x="11" y="15" width="4" height="10" fill="#2d5f85"/>
            <rect x="18" y="11" width="4" height="16" fill="#2d5f85"/>
            <rect x="25" y="6" width="4" height="21" fill="#23506f"/>
            <rect x="31" y="2" width="3" height="19" fill="#7fb2cd"/>
          </svg>
          <span class="home">Home</span>
          <div class="tab">${ic("tabdoc", "doc")}Global - PopAds - WW_Android_Chrome${fa("times", "x")}</div>
        </div>
        <div>
          <div class="r pay">${fa("excl")}Payment</div>
          <div class="r">${fa("question")}Support</div>
          <div class="r">${fa("cog")}Settings</div>
          <div class="r">${fa("user", "u")}Hi, Sarvesh</div>
        </div>
      </div>
      <div class="band b1">${band1.map(([i, t]) => html`<div class="it">${i}${t}</div>`)}</div>
      <div class="band b2">${band2.map(([i, t, a]) => html`<div class="it ${a}">${i}${t}</div>`)}</div>
      <div class="main">
        <div class="badgeRow"><div class="badge">Global - PopAds - WW_Android_Chrome</div></div>
        <div class="ctl">
          <div class="sel first">Custom 3 (Categ<span class="caret"></span></div>
          <div class="sel"><span></span><span class="caret"></span></div>
          <div class="sel third"><span></span><span class="caret"></span></div>
          <div class="sp"></div>
          <div class="sbtn">${fa("search")}</div>
          <div class="sstar">${fa("star")}</div>
          <div class="sinput">Search...</div>
          <div class="sel last">Last 30 days<span class="caret"></span></div>
          <div class="btn usdb"><span class="usd">$</span>USD<span class="caret sm"></span></div>
          <div class="btn refr">${ic("refresh")}Refresh</div>
          <div class="btn note">${ic("comment")}Notes</div>
          <div class="btn chrt">${ic("chart")}Chart</div>
        </div>
        <div class="ctl2">
          <div class="marks">
            <span class="m1">${ic("ban", "s22")}</span>
            <span class="m1">${fa("minus")}</span>
            <span class="m2">${fa("plus")}</span>
            <span class="m2">${fa("check")}</span>
            <span class="m3">${fa("pause")}</span>
            <span class="m1">${fa("heart")}</span>
            <span class="m4">${fa("star")}</span>
            <span class="trash">${ic("trash")}</span>
          </div>
          <div class="del">Delete marks</div>
          <div class="gr rep">${fa("filter")}Report</div>
          <div class="gr dril">${fa("filter")}Drilldown report</div>
          <div class="btn exp">${ic("save")}Export CSV</div>
          <div class="btn per">${fa("bars")}50<span class="caret sm"></span></div>
          <div class="btn colb">${ic("cols")}<span class="caret sm"></span></div>
        </div>
      </div>
      <div class="grid head">
        <div class="cb"></div>
        <div class="nm">Custom 3</div>
        ${heads.map((h, i) => html`<div class="hc ${i === 2 ? "tight" : ""}">
          <span class="t">${h}</span>
          ${h === "ROI" ? html`<span class="sort"></span>` : ""}
          <span class="flt ${i === 2 ? "on" : ""}">${fa("filter")}</span>
        </div>`)}
      </div>
      <div class="rows">${rows.map((r) => this.renderRow(r))}</div>
      <div class="grid foot">
        <div class="sp4"></div>
        ${totals.map((v) => html`<div class="fc ${v.includes("-") ? "red" : ""}">${money(v)}</div>`)}
      </div>
    </div>`;
  }
}
